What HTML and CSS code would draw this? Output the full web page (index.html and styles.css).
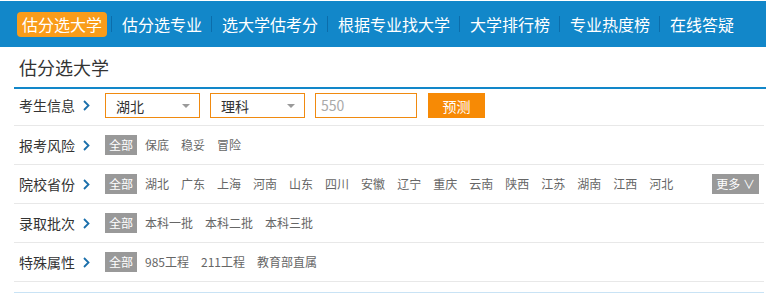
FILE: index.html
```html
<!DOCTYPE html>
<html lang="zh-CN">
<head>
<meta charset="utf-8">
<title>估分选大学</title>
<link rel="stylesheet" href="styles.css">
</head>
<body>
<div class="page">
  <nav class="topnav">
    <a class="nav-item active">估分选大学</a><span class="nav-sep"></span>
    <a class="nav-item">估分选专业</a><span class="nav-sep"></span>
    <a class="nav-item">选大学估考分</a><span class="nav-sep"></span>
    <a class="nav-item">根据专业找大学</a><span class="nav-sep"></span>
    <a class="nav-item">大学排行榜</a><span class="nav-sep"></span>
    <a class="nav-item">专业热度榜</a><span class="nav-sep"></span>
    <a class="nav-item">在线答疑</a>
  </nav>
  <div class="content">
    <h2 class="title">估分选大学</h2>

    <div class="row row-info">
      <div class="label">考生信息<svg class="chev" width="7" height="11" viewBox="0 0 7 11"><polyline points="1,1 5.5,5.5 1,10" fill="none" stroke="#1a6fab" stroke-width="1.8"/></svg></div>
      <div class="select"><span>湖北</span><i class="tri"></i></div>
      <div class="select"><span>理科</span><i class="tri"></i></div>
      <div class="score">550</div>
      <button class="btn">预测</button>
    </div>

    <div class="row">
      <div class="label">报考风险<svg class="chev" width="7" height="11" viewBox="0 0 7 11"><polyline points="1,1 5.5,5.5 1,10" fill="none" stroke="#1a6fab" stroke-width="1.8"/></svg></div>
      <div class="tags">
        <span class="tag on">全部</span><span class="tag">保底</span><span class="tag">稳妥</span><span class="tag">冒险</span>
      </div>
    </div>

    <div class="row">
      <div class="label">院校省份<svg class="chev" width="7" height="11" viewBox="0 0 7 11"><polyline points="1,1 5.5,5.5 1,10" fill="none" stroke="#1a6fab" stroke-width="1.8"/></svg></div>
      <div class="tags">
        <span class="tag on">全部</span><span class="tag">湖北</span><span class="tag">广东</span><span class="tag">上海</span><span class="tag">河南</span><span class="tag">山东</span><span class="tag">四川</span><span class="tag">安徽</span><span class="tag">辽宁</span><span class="tag">重庆</span><span class="tag">云南</span><span class="tag">陕西</span><span class="tag">江苏</span><span class="tag">湖南</span><span class="tag">江西</span><span class="tag">河北</span>
      </div>
      <span class="more">更多 ∨</span>
    </div>

    <div class="row">
      <div class="label">录取批次<svg class="chev" width="7" height="11" viewBox="0 0 7 11"><polyline points="1,1 5.5,5.5 1,10" fill="none" stroke="#1a6fab" stroke-width="1.8"/></svg></div>
      <div class="tags">
        <span class="tag on">全部</span><span class="tag">本科一批</span><span class="tag">本科二批</span><span class="tag">本科三批</span>
      </div>
    </div>

    <div class="row">
      <div class="label">特殊属性<svg class="chev" width="7" height="11" viewBox="0 0 7 11"><polyline points="1,1 5.5,5.5 1,10" fill="none" stroke="#1a6fab" stroke-width="1.8"/></svg></div>
      <div class="tags">
        <span class="tag on">全部</span><span class="tag">985工程</span><span class="tag">211工程</span><span class="tag">教育部直属</span>
      </div>
    </div>

    <div class="table-head">
      <div class="th w1"></div><div class="th w2"></div><div class="th w3"></div><div class="th w4"></div><div class="th w5"></div>
    </div>
  </div>
</div>
</body>
</html>
```

FILE: styles.css
```css
* { box-sizing: border-box; }
html, body { margin: 0; padding: 0; background: #fff; }
body {
  font-family: "Noto Sans CJK SC", "Microsoft YaHei", sans-serif;
  color: #333;
  overflow: hidden;
}
.page { padding-top: 1px; width: 766px; }

.topnav {
  height: 46px;
  background: #1287c9;
  display: flex;
  align-items: center;
  padding-left: 17px;
}
.nav-item {
  color: #fff;
  font-size: 16px;
  line-height: 25px;
  height: 25px;
  padding: 0 5px;
  border-radius: 4px;
  white-space: nowrap;
}
.nav-item.active { background: #f99c1a; }
.nav-sep {
  width: 1px;
  height: 16px;
  background: #0b6dab;
  margin: 0 5px 0 4px;
}

.content { padding-left: 14px; }
.title {
  margin: 0;
  height: 42px;
  line-height: 40px;
  font-size: 18px;
  font-weight: normal;
  color: #333;
  padding-left: 5px;
  border-bottom: 2px solid #1287c9;
}

.row {
  display: flex;
  align-items: center;
  height: 39px;
  margin-right: 2px;
  border-bottom: 1px solid #e8e8e8;
}
.row-info {
  height: 37px;
  align-items: flex-start;
  padding-top: 4px;
}
.label {
  width: 91px;
  flex: none;
  padding-left: 5px;
  font-size: 14px;
  line-height: 25px;
  color: #333;
  display: flex;
  align-items: center;
}
.chev { margin-left: 8px; }

.select {
  width: 95px;
  height: 25px;
  border: 1px solid #f08a10;
  display: flex;
  align-items: center;
  justify-content: space-between;
  padding: 0 9px 0 10px;
  font-size: 14px;
  color: #333;
  margin-right: 10px;
}
.tri {
  width: 0; height: 0;
  border-left: 4px solid transparent;
  border-right: 4px solid transparent;
  border-top: 4px solid #9a9a9a;
}
.score {
  width: 102px;
  height: 25px;
  border: 1px solid #f08a10;
  padding-left: 5px;
  font-size: 14px;
  line-height: 23px;
  color: #aaa;
  margin-right: 11px;
}
.btn {
  width: 57px;
  height: 25px;
  background: #f78a05;
  border: none;
  color: #fff;
  font-family: inherit;
  font-size: 14px;
  padding: 0;
}

.tags { display: flex; flex: 1; }
.tag {
  font-size: 12px;
  line-height: 20px;
  height: 20px;
  padding: 0 4px;
  margin-right: 4px;
  color: #666;
  white-space: nowrap;
}
.tag.on { background: #999; color: #fff; }
.more {
  background: #999;
  color: #fff;
  font-size: 12px;
  line-height: 20px;
  height: 20px;
  padding: 0 4px;
  margin-right: 5px;
  white-space: nowrap;
}

.table-head {
  display: flex;
  margin-top: 10px;
  margin-right: 2px;
  height: 30px;
  border: 1px solid #c9e3f5;
  background: #eef6fc;
}
.th { border-left: 1px solid #c9e3f5; }
.th.w1 { width: 188px; border-left: none; }
.th.w2 { width: 76px; }
.th.w3 { width: 338px; }
.th.w4 { width: 74px; }
.th.w5 { flex: 1; }
```
